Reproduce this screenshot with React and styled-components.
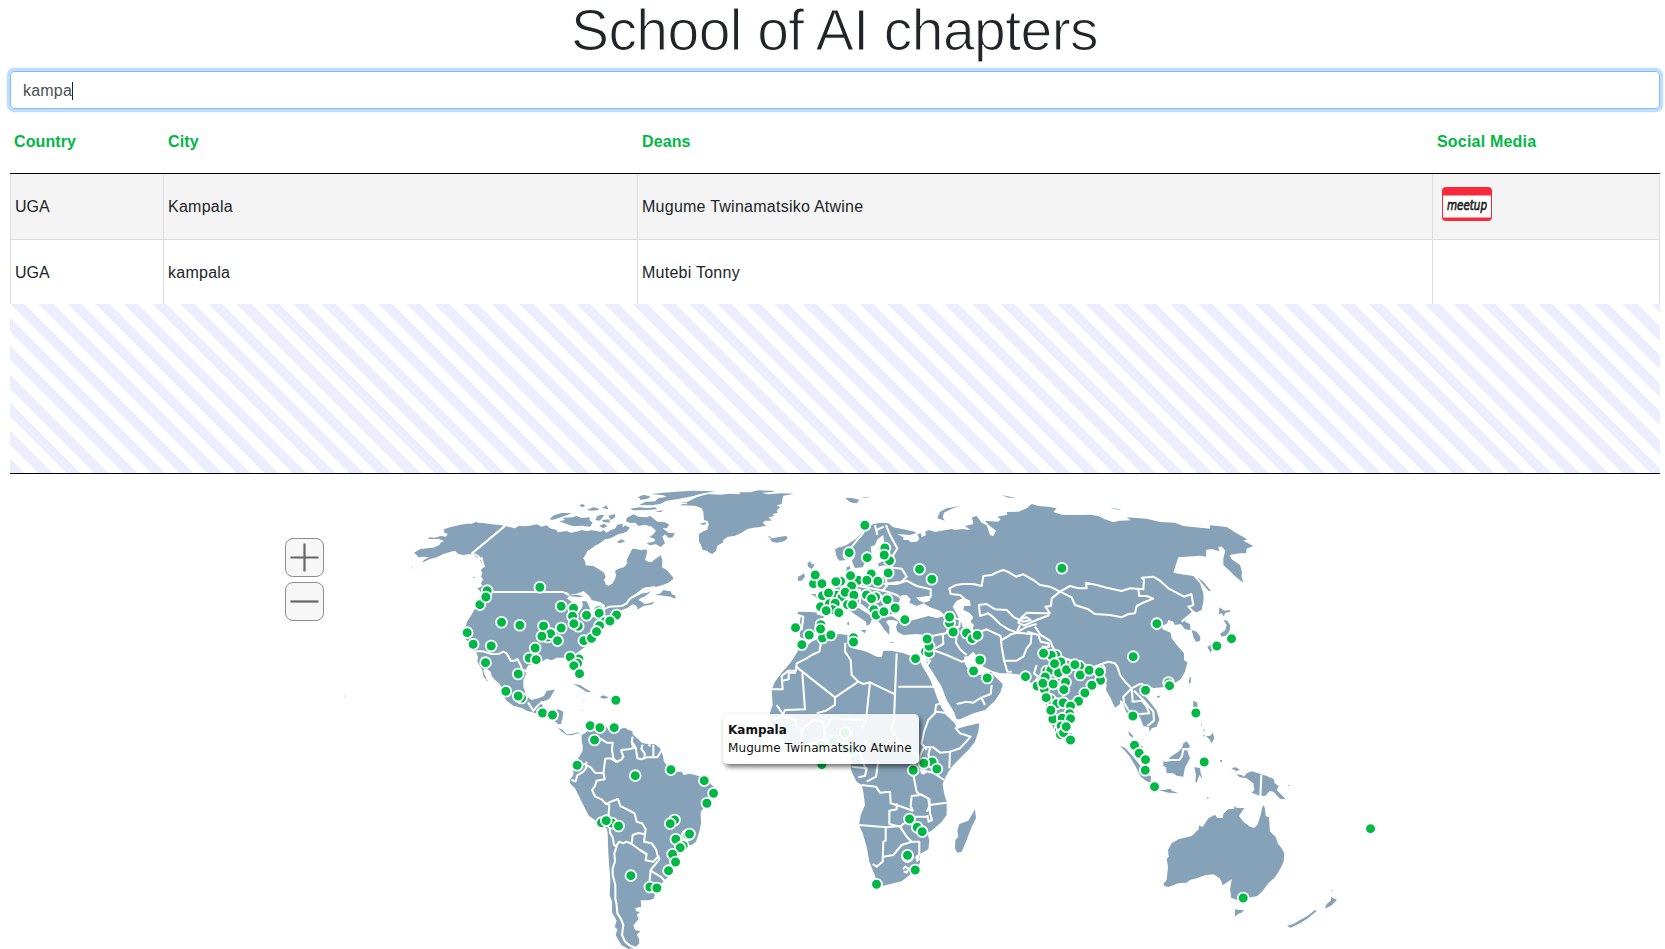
import React from 'react';
import styled, { createGlobalStyle } from 'styled-components';

const LAND = '#86a2b8';
const GREEN = '#00b845';

const GlobalStyle = createGlobalStyle`
  html, body { margin: 0; padding: 0; background: #fff; overflow: hidden; }
  *, *::before, *::after { box-sizing: border-box; }
  body { font-family: "Liberation Sans", Arial, sans-serif; font-size: 16px; color: #212529; }
`;

const Page = styled.main`
  width: 1665px;
  height: 949px;
  display: flex;
  flex-direction: column;
  overflow: hidden;
`;

const Title = styled.h1`
  margin: 0;
  height: 71px;
  padding-left: 4px;
  text-align: center;
  font-size: 57px;
  font-weight: 400;
  line-height: 60px;
  letter-spacing: -0.55px;
  white-space: nowrap;
  color: #212529;
  -webkit-text-stroke: 1.1px #fff;
`;

const Search = styled.div`
  display: flex;
  align-items: center;
  margin: 0 5px 0 10px;
  height: 38px;
  flex: none;
  padding: 1px 12px 0;
  border: 1px solid #80bdff;
  border-radius: 4px;
  box-shadow: 0 0 0 3.2px rgba(0, 123, 255, 0.25);
  color: #495057;
`;

const Query = styled.span`
  letter-spacing: 0.2px;
  line-height: 18px;
  border-right: 1px solid #222;
`;

const Table = styled.section`
  margin: 0 5px 0 10px;
  height: 365px;
  flex: none;
  display: flex;
  flex-direction: column;
  border-bottom: 1px solid #000;
`;

const columns = '153px 474px 795px 228px';

const HeadRow = styled.div`
  display: grid;
  grid-template-columns: ${columns};
  height: 65px;
  padding-top: 2px;
  flex: none;
  align-items: center;
  border-bottom: 1px solid #000;
`;

const HeadCell = styled.div`
  padding-left: ${(p) => (p.$first ? 4 : 5)}px;
  font-weight: 700;
  color: ${GREEN};
  letter-spacing: ${(p) => p.$spacing || 0.1}px;
`;

const Row = styled.div`
  display: grid;
  grid-template-columns: ${columns};
  height: ${(p) => (p.$striped ? 66 : 64)}px;
  flex: none;
  background: ${(p) => (p.$striped ? '#f4f4f4' : '#fff')};
  border-right: 1px solid #ddd;
  border-bottom: ${(p) => (p.$striped ? '1px solid #ddd' : '0')};
`;

const Cell = styled.div`
  display: flex;
  align-items: center;
  border-left: 1px solid #ddd;
  padding: ${(p) => (p.$low ? 2 : 0)}px 0 0 4px;
  color: #212529;
  letter-spacing: ${(p) => p.$spacing ?? 0.25}px;
`;

const Filler = styled.div`
  flex: 1;
  background: repeating-linear-gradient(45deg, #ecedfd 0, #ecedfd 10px, #fff 10px, #fff 20px);
`;

const MeetupIcon = styled.svg`
  display: block;
  overflow: visible;
  margin: -6px 0 0 5px;
`;

const MapPanel = styled.section`
  position: relative;
  flex: 1;
  min-height: 0;
`;

const MapSvg = styled.svg`
  display: block;
`;

const ZoomControls = styled.div`
  position: absolute;
  left: 284.5px;
  top: 63.5px;
  display: flex;
  flex-direction: column;
  gap: 5px;
`;

const ZoomButton = styled.button`
  width: 39px;
  height: 39px;
  padding: 0;
  border: 1px solid #8d8d8d;
  border-radius: 8px;
  background: #f7f7f7;
  display: grid;
  place-items: center;
`;

const Tooltip = styled.div`
  position: absolute;
  left: 723px;
  top: 240px;
  width: 196px;
  height: 50px;
  padding: 8px 0 0 5px;
  border-radius: 5px;
  background: rgba(255, 255, 255, 0.89);
  box-shadow: 2px 3px 5px rgba(0, 0, 0, 0.55);
  font-family: "DejaVu Sans", sans-serif;
  font-size: 12px;
  line-height: 18px;
  color: #111;
  white-space: nowrap;
`;

const TipTitle = styled.div`
  font-weight: 700;
  line-height: 17px;
  font-size: 12px;
`;

const TipText = styled.div`
  letter-spacing: 0.09px;
`;

/* Each region has its own origin on the page; its units are thirds of a pixel. */
const regions = [
  {
    x: 400, y: 480,
    land: [
      '42 218 60 208 80 205 100 203 118 195 122 188 132 184 118 177 86 177 86 172 105 173 122 168 138 170 143 161 133 158 132 148 150 142 175 136 200 131 215 131 230 125 236 129 250 129 275 133 300 135 316 138 345 145 356 138 375 139 390 137 410 133 425 140 440 136 450 145 468 149 474 157 500 153 512 158 530 155 545 150 560 153 575 151 590 153 602 156 610 150 620 158 632 150 645 146 652 134 668 131 668 143 675 136 690 143 680 155 668 160 656 162 632 175 615 178 600 190 585 197 575 205 562 213 558 222 550 235 556 247 557 256 580 258 597 268 612 278 617 290 612 300 618 314 626 317 638 310 646 295 648 285 645 272 660 265 672 262 682 250 680 240 690 220 697 206 712 208 722 211 738 208 742 215 738 230 735 240 745 245 755 247 762 240 782 226 787 240 786 262 800 270 818 290 820 297 805 308 790 314 770 320 740 321 728 325 715 335 700 348 690 355 700 353 715 346 728 340 742 338 752 332 747 340 733 350 724 353 715 360 725 365 733 372 748 370 762 365 758 373 730 378 712 389 712 380 700 372 680 385 665 390 650 405 640 420 620 430 612 440 605 452 595 460 590 475 580 485 570 490 560 498 545 508 530 520 520 530 525 545 540 570 545 585 538 590 525 580 515 560 505 545 490 533 470 533 455 541 440 536 425 545 405 550 385 556 375 572 378 582 370 600 370 620 377 640 387 655 395 660 415 655 432 648 440 632 465 629 458 640 450 655 440 661 420 665 418 672 428 674 428 684 408 690 425 706 398 697 380 692 365 684 340 677 320 662 312 650 304 625 300 613 285 600 275 588 272 575 262 568 255 550 247 535 238 520 240 515 246 540 258 565 250 570 254 585 262 602 250 590 247 570 238 556 232 545 234 530 228 515 215 505 208 490 195 475 190 460 197 440 201 425 210 412 220 395 228 380 235 360 246 340 232 325 248 318 243 310 250 298 243 290 247 280 243 270 250 262 245 250 240 240 250 238 246 230 232 234 222 226 210 222 190 225 175 222 165 212 150 216 130 222 110 232 90 237 66 248 72 240 87 232 70 230 55 232 50 225',
      '448 118 462 106 485 99 515 99 500 106 478 113 460 119',
      '478 124 495 120 488 113 520 112 528 107 545 114 570 112 568 120 578 128 570 140 545 137 520 139 500 132',
      '586 120 592 108 603 104 612 106 605 116 598 122', '606 120 628 118 630 128 610 126', '598 138 612 131 622 138 610 145',
      '680 114 700 103 715 110 740 112 750 107 772 125 795 127 808 134 800 145 788 145 805 158 825 160 818 172 806 174 795 163 787 170 795 190 782 201 768 193 750 196 740 190 765 184 765 178 748 170 758 165 768 152 755 140 735 134 715 138 706 128 690 129 678 124',
      '755 42 790 38 830 35 880 32 945 34 900 42 880 48 850 54 830 58 800 62 780 72 755 76 718 75 735 66 765 64 775 55 800 50 790 46',
      '712 52 730 46 750 48 746 55 725 57', '690 86 720 82 740 84 765 82 772 88 740 90 700 91', '538 76 548 72 556 78 546 82', '560 90 580 82 592 84 598 90 575 92', '606 84 620 76 625 88', '625 107 645 102 645 112 632 120', '650 186 665 178 676 184 660 190', '765 94 790 91 782 97',
      '765 345 782 340 790 330 800 332 812 334 816 343 828 348 824 356 812 350 795 348 778 346',
      '520 612 540 615 560 628 575 637 560 636 545 626', '600 650 610 646 625 652 615 656 605 655', '220 288 226 294 220 293', '34 262 38 264 34 265',
      '460 690 490 695 487 720 470 718 478 705',
    ],
    water: [
      '488 338 500 335 510 345 535 340 550 333 568 348 575 360 600 366 615 376 612 392 585 410 575 412 560 392 550 372 545 385 530 405 522 392 530 368 515 365 500 355 508 350',
    ],
    patches: ['500 347 528 344 552 349 538 352', '545 364 560 364 570 385 568 395 552 385'],
    lines: [
      '316 137 216 220 232 227 246 240 252 262', '258 336 492 336', '610 388 628 380 665 378 680 370 690 356 712 342 740 326 765 321',
      '226 514 248 514 275 522 298 521 310 515 320 520 332 542 345 542 352 537 362 556 366 568 378 573', '384 667 400 692 418 672',
    ],
  },
  {
    x: 640, y: 480,
    land: [
      '118 66 140 67 146 64 170 52 190 46 205 42 240 44 270 41 298 43 300 37 330 37 355 31 405 32 395 36 366 38 382 43 425 40 462 41 430 47 427 58 425 72 410 76 420 82 410 92 414 98 398 102 402 108 385 112 395 122 376 122 368 128 378 137 360 141 340 143 322 147 305 158 285 167 262 171 250 180 248 188 232 197 228 212 217 222 205 217 202 212 188 210 183 195 177 185 177 162 190 154 202 149 206 134 204 124 192 120 190 95 185 85 165 77 120 76 128 72 142 73 140 69',
      '0 49 12 45 30 52 18 58 0 59', '180 131 195 127 200 133 185 134', '382 168 392 170 396 175 418 171 430 169 440 168 442 176 432 184 412 188 398 186 388 178 396 178',
      '502 251 510 243 515 253 524 252 520 261 514 267 505 260', '474 290 485 285 492 280 495 290 485 302 474 303', '512 343 528 342 526 350', '586 208 600 200 600 240 592 235',
    ],
    lines: [],
  },
  {
    x: 440, y: 680,
    land: [
      '425 165 435 160 445 150 450 140 470 135 498 137 505 150 525 150 555 143 565 150 577 153 578 163 595 178 605 188 625 193 645 193 660 205 668 225 672 245 685 262 700 275 725 275 730 285 750 281 785 290 800 300 822 322 822 340 812 365 790 385 782 395 783 430 778 455 768 485 755 495 735 498 722 510 715 535 705 560 695 580 680 595 665 610 655 625 640 635 645 645 640 657 625 661 602 661 604 680 586 684 588 694 600 696 590 705 596 716 588 727 580 736 585 750 600 754 590 765 597 776 598 790 585 803 565 807 545 796 535 780 527 765 532 748 524 740 530 722 516 697 516 665 509 645 511 600 508 560 505 520 503 460 500 445 480 435 465 420 447 408 440 395 420 355 405 325 390 310 390 300 400 285 400 260 415 235 428 212 428 195 425 185',
      '345 92 355 88 370 95 366 110 364 132 355 133 344 124 356 116 350 104', '352 142 368 150 380 163 398 161 412 157 425 165 412 160 396 166 380 165 364 154',
      '424 90 428 92 424 93', '138 0 142 0 143 5', '430 60 434 61 431 63', '500 52 504 52 504 55',
    ],
    lines: [
      '510 445 510 458 518 472 522 495 530 500 523 520 525 545 518 565 518 585 526 615 526 655 530 675 532 700 542 715 550 735 546 765 555 785 570 797 588 803',
      '440 245 438 255 452 262 465 278 490 280 496 236 512 235 530 246 545 238 550 230 543 210 565 208 582 204 575 190',
      '463 176 485 178 500 188 518 188 516 210 520 235 530 246', '410 255 438 252 438 265 430 275 412 286 407 304 394 300',
      '491 280 494 298 470 302 465 318 456 330 466 350 485 358 498 372 520 362 534 357 541 378 565 390 584 400 590 425 606 430 617 448 612 485 635 490 648 508 654 530 640 545 617 541 620 522 600 510 575 492 560 485 550 490 538 485 528 498',
      '498 370 508 375 506 400 505 430', '575 490 578 465 595 459 612 462', '655 528 658 538 632 570 628 610', '632 572 665 592 675 605',
      '578 170 575 185 587 202 592 235 605 238 622 232 652 232 664 212', '608 194 604 206 615 222 612 235', '640 195 640 230', '625 195 632 197',
    ],
  },
  {
    x: 760, y: 480,
    land: [
      '340 132 365 128 385 130 400 142 430 148 465 155 468 160 450 165 412 162 430 172 430 180 445 180 452 187 470 185 478 178 472 162 484 160 484 172 498 165 495 155 508 150 525 156 545 152 575 147 585 150 605 147 632 150 615 138 640 132 636 112 650 108 665 128 680 136 690 165 700 168 708 152 686 135 675 122 715 125 722 118 712 110 742 104 740 96 775 95 800 85 815 72 835 78 865 80 890 85 880 96 905 104 950 105 990 104 1015 108 1035 118 1060 127 1078 122 1112 121 1100 112 1160 116 1200 126 1245 128 1270 138 1350 146 1350 136 1400 141 1430 160 1462 178 1450 182 1480 198 1460 206 1458 220 1440 220 1408 225 1415 238 1440 255 1446 275 1445 290 1450 308 1430 293 1412 275 1390 255 1390 235 1396 212 1386 200 1375 200 1378 214 1355 207 1338 210 1338 230 1320 227 1255 232 1240 278 1265 283 1300 288 1320 310 1330 340 1331 360 1325 390 1310 397 1296 393 1295 405 1278 412 1275 425 1290 432 1292 450 1275 448 1262 432 1245 435 1240 425 1225 420 1222 430 1206 438 1208 448 1232 458 1235 475 1250 495 1272 520 1272 540 1282 547 1275 575 1262 598 1240 612 1210 622 1180 624 1160 616 1148 628 1155 648 1175 672 1190 692 1198 718 1190 740 1175 745 1167 756 1168 742 1150 738 1140 712 1128 705 1110 715 1096 690 1088 665 1080 660 1080 672 1065 683 1052 655 1038 630 1040 615 1030 590 1020 605 1002 610 985 625 970 645 945 665 930 680 925 715 912 740 898 768 885 762 870 715 860 680 850 640 840 625 825 615 800 600 775 583 750 580 720 580 695 572 680 565 670 560 655 535 640 515 625 528 612 530 612 545 622 565 642 580 660 585 680 580 693 575 700 585 728 612 722 635 705 662 675 690 640 700 600 718 590 718 582 695 560 660 545 620 520 580 500 550 500 535 495 510 505 480 495 465 470 462 430 465 412 455 408 440 415 425 400 420 385 420 378 425 388 440 388 465 372 448 360 430 345 415 335 400 320 385 305 372 295 370 280 372 305 390 330 405 345 418 335 420 330 432 320 438 318 425 298 412 278 398 265 388 240 395 220 402 200 408 172 422 166 442 165 465 135 480 120 470 118 440 122 410 112 402 115 395 150 396 180 398 185 385 178 362 165 348 180 350 200 335 225 320 240 310 255 300 258 285 260 262 270 258 272 285 300 300 350 300 372 290 368 268 385 262 372 256 355 260 355 250 372 242 398 238 396 228 380 234 362 226 355 205 372 185 370 165 352 178 345 195 332 200 335 222 315 248 308 262 285 264 278 250 275 235 260 240 238 242 228 225 226 208 260 195 290 175 315 148',
      '255 55 275 54 298 59 290 70 275 68 265 62', '303 52 330 50 318 53', '532 115 540 95 560 85 600 78 575 86 552 98 548 112 555 122',
      '725 45 750 50 768 54 745 53', '783 58 797 62', '1048 84 1070 86 1088 89 1065 88', '262 426 267 426 267 436 262 434', '302 450 319 450 314 460', '384 485 400 486 400 490',
      '1312 292 1330 305 1342 320 1354 333 1345 332 1325 308', '1295 450 1310 455 1321 470 1320 482 1308 486 1300 470',
      '1378 382 1392 392 1412 390 1408 397 1395 398 1392 410 1385 400 1377 403', '1390 420 1402 422 1410 435 1410 448 1402 466 1385 470 1380 462 1396 450 1400 435', '1342 502 1355 492 1360 500 1352 518',
      '1288 595 1293 590 1292 608 1287 612', '1190 648 1202 647 1195 655', '922 754 938 762 942 780 930 788 920 775', '715 605 728 618 720 630',
    ],
    water: [
      '578 380 590 362 612 353 630 362 632 378 612 378 610 390 628 398 640 412 632 425 642 435 638 448 652 455 640 460 612 455 605 430 592 405',
      '414 372 425 345 440 345 452 358 448 368 470 378 490 370 510 382 540 392 556 408 530 414 505 408 475 416 440 425 415 422 405 415 395 408',
      '468 352 490 350 512 348 510 362 492 368 478 362', '1105 690 1116 690 1120 702 1108 706',
    ],
    lines: [
      '612 355 600 345 572 342 568 325 588 315 610 312 640 312 665 318 670 288 695 285 715 275 730 270 745 276 768 290 790 283 820 300 840 315 870 320 900 335',
      '900 335 930 318 955 325 980 325 978 308 1010 315 1040 323 1085 333 1110 325 1150 328 1152 300 1145 293 1180 290 1200 302 1225 325 1272 350 1294 342 1300 375 1285 380 1300 396 1265 425',
      '900 335 935 352 945 375 985 388 1005 402 1050 405 1085 412 1105 402 1125 400 1130 378 1145 370 1180 356 1160 348 1138 348 1135 328',
      '900 335 875 355 873 378 856 380 870 400 848 400 800 398 785 412 775 428 792 436 830 420 868 405', '655 375 680 372 705 388 740 390 762 412 790 425 812 420 800 412 780 418',
      '657 375 660 408 685 400 700 412 720 432 745 448 770 458 800 440 830 432', '652 458 680 448 722 468 725 500 732 540 742 575 755 575',
      '725 480 755 462 775 458 815 462 812 490 800 505 790 530 770 542 735 542', '770 458 780 435', '802 455 835 465 842 485 865 490 868 500 845 500',
      '825 440 842 465 870 482 880 505 900 530 960 550 1000 562 1025 552 1045 545 1065 550 1072 560 1080 585 1095 605 1115 625 1140 612 1150 612', '830 555 822 580 835 590 822 610',
      '1028 555 1035 565 1025 585 1035 595', '1115 625 1090 650 1092 668 1105 690', '1115 625 1118 665 1145 662 1160 680 1168 700 1140 702 1145 704', '1122 632 1150 660 1180 695 1182 722 1162 738',
      '378 135 388 160 398 180 412 205 396 232', '345 135 352 165', '315 150 305 165 290 182 274 202 274 230', '350 150 372 140', '396 242 396 262 358 262', '385 262 425 266 440 290 425 305 372 312', '372 312 410 312 440 302 470 318 512 328 512 350 495 352',
      '375 290 382 315 365 335', '295 318 340 326 375 333 410 345 425 355', '220 325 245 340 245 375 230 395', '255 320 300 330 300 370', '300 345 370 350 410 375', '330 350 335 385 360 410 400 405', '345 385 390 380 412 385', '170 400 200 408', '114 405 130 410 125 450',
      '555 412 568 440 558 460 530 465 505 470', '580 395 560 412 600 418 598 440 575 445', '548 462 550 492 520 508 502 545', '590 462 588 488 600 508 620 525', '525 512 560 525 605 545 620 540',
      '590 672 620 665 640 668 660 655 692 642 695 615', '665 655 675 675', '502 555 512 540',
    ],
  },
  {
    x: 720, y: 640,
    land: [
      '275 5 290 -2 320 -12 360 -18 382 -15 388 10 398 25 420 30 440 35 470 50 485 52 490 32 515 32 550 40 585 52 600 58 605 75 615 92 630 118 642 148 652 175 665 205 685 230 703 248 712 266 740 258 778 250 775 275 765 305 745 330 720 355 700 375 685 395 675 415 668 432 672 460 680 485 680 525 665 545 640 568 622 580 628 600 625 628 600 642 600 668 585 690 565 708 545 724 520 730 490 737 478 732 468 715 458 690 448 665 440 620 428 580 417 555 422 525 435 495 430 455 425 435 410 425 398 402 392 385 395 360 385 345 370 325 340 325 305 305 260 310 220 318 195 300 170 270 150 245 150 218 158 195 155 150 165 125 185 98 210 70 225 48 235 30 260 18',
      '765 508 768 535 755 560 740 600 725 635 712 638 705 625 706 600 715 590 712 570 718 552 745 542 755 525',
    ],
    water: ['602 392 615 388 622 395 612 404 602 400'],
    lines: [
      '293 -10 302 15 298 35 275 45 260 55 230 70 228 92 205 92 185 108 188 148 155 148', '228 98 206 98 206 118 188 122', '228 80 345 172', '247 100 255 208 195 210 190 222',
      '345 172 345 195 318 212 290 220', '345 172 415 125 395 105 392 60 375 35 376 8', '415 125 430 132 450 127 445 175 438 240 425 265', '450 127 525 163 530 40', '535 140 642 140', '525 163 522 240 515 270 540 310 600 350',
      '660 190 648 195 645 220 625 240 612 275 605 310 620 330', '648 215 675 218 705 245', '705 262 720 280 752 290 720 325 690 335 660 338 640 322 610 322', '690 332 688 385', '630 325 625 345 635 370', '600 390 640 398 672 420',
      '610 325 600 350 582 380 580 405 590 455 600 465 575 468 572 498 578 512 545 500 512 490 510 455 480 458 468 440 425 435', '475 362 468 410 440 425', '395 380 440 385 435 408 415 412', '440 300 420 340 440 395',
      '530 490 530 508 508 512 508 552 540 560 580 530 625 530', '600 462 625 475 628 500 620 515', '628 475 630 520 636 540 626 545 622 525', '628 495 680 488', '417 555 500 562 540 558',
      '497 562 497 602 490 605 488 665 470 680 458 672', '540 560 560 590 575 605 598 605 598 640 590 665', '490 650 520 645 545 615 575 605', '549 688 556 680 565 686 560 698 551 694', '586 655 592 648 597 658 590 662',
      '170 195 190 225 160 240', '190 230 225 240 235 270', '245 310 245 270 280 240 310 245 315 300', '318 262 335 235 430 240',
    ],
  },
  {
    x: 1100, y: 680,
    land: [
      '60 198 75 203 95 225 115 250 140 278 153 290 152 308 140 304 122 290 108 262 90 230 75 212', '84 152 98 166 100 175 88 166', '122 196 130 202 122 203', '175 330 190 330 210 326 216 332 236 340 205 338',
      '190 242 200 246 210 232 235 215 246 204 250 190 260 184 270 198 262 212 270 235 262 250 255 262 250 290 230 287 220 280 200 280 198 262 190 258',
      '283 262 300 264 302 280 308 298 298 285 290 308 286 305 288 285', '280 62 292 68 293 90 280 82', '318 168 330 168 338 158 343 175 335 190 328 178', '310 162 315 168 311 170', '303 133 307 135 303 137', '308 150 314 148 312 154',
      '266 0 272 0 269 12', '360 240 366 240 366 246 361 246', '562 315 570 315 568 318', '320 352 328 354 322 357',
      '394 264 408 262 420 270 408 273', '408 283 425 285 432 290 440 280 455 274 475 280 500 288 522 298 524 310 536 318 530 330 545 345 557 358 540 356 520 335 508 333 497 347 480 348 455 338 463 330 460 310 440 295 420 292',
      '403 378 410 384 433 384 417 408 430 425 450 440 462 444 472 435 482 405 486 385 490 375 495 385 497 408 507 412 510 455 527 470 533 490 545 505 553 520 551 545 540 568 525 592 505 610 490 630 472 648 440 655 412 660 393 653 392 640 390 630 395 598 368 616 360 595 340 583 315 586 290 595 270 600 260 608 235 610 205 621 193 618 190 612 200 600 204 560 200 537 206 530 204 510 215 490 235 478 275 468 296 448 298 436 308 442 325 415 345 404 352 414 368 414 370 402 384 388 403 386',
      '405 688 418 690 432 690 425 698 414 702 405 711', '561 738 580 732 600 720 622 708 645 690 650 693 625 714 600 730 572 743', '675 686 680 672 692 662 694 650 700 655 711 659 695 676 680 684', '693 628 697 630 697 636',
    ],
    lines: ['193 243 210 240 238 240 246 228 250 207 272 208', '484 284 481 350'],
  },
];

const dotGroups = [
  [400, 480, '419 321 261 331 239 373 257 350 304 426 359 435 201 457 219 492 273 497 256 547 483 378 520 384 517 408 559 405 595 391 597 399 649 404 614 424 629 422 598 436 589 454 534 438 521 430 430 437 483 443 442 470 451 460 425 468 472 481 551 481 574 474 589 454 387 533 405 503 408 538 536 536 510 530 532 549 521 556 538 580 354 581 317 633 364 653 354 647 647 660 427 698 457 704'],
  [440, 680, '450 136 479 142 522 142 463 179 411 255 585 286 692 268 792 301 820 339 800 369 703 419 690 430 742 464 748 461 707 477 729 496 720 502 697 522 706 545 685 571 484 427 515 428 498 421 535 437 572 586 629 620 650 623'],
  [760, 480, '314 135 266 223 267 217 321 232 374 203 388 241 372 224 160 310 165 284 185 310 294 300 271 286 333 281 384 278 241 303 227 304 320 300 353 303 274 317 187 346 228 345 205 338 246 350 255 336 281 345 181 379 208 370 225 369 262 373 277 373 217 388 198 391 236 397 319 344 346 350 334 355 381 358 341 388 348 404 371 394 405 383 434 418 106 442 147 464 182 433 187 473 181 446 212 464 125 493 280 472 280 485 478 267 515 297 568 428 568 410 579 455 619 458 636 475 651 465 496 514 506 517 507 498 501 476 466 535 659 539 640 572 681 593 796 589'],
  [1000, 480, '185 264 470 430 399 529 694 475 650 497 436 630 505 607 508 616 587 698 398 707 403 795 417 819 436 838 435 870 612 845 167 525 153 525 130 519 182 545 140 572 152 570 175 577 163 550 199 568 238 558 240 584 224 553 267 570 301 600 298 575 135 590 111 617 132 626 128 609 159 611 196 606 191 628 275 615 254 638 235 663 150 657 138 652 170 670 189 667 211 677 158 716 152 690 208 700 186 714 211 715 178 748 183 737 181 763 190 757 198 739 211 779'],
  [720, 640, '302 315 338 303 370 325 397 330 375 277 305 373 579 390 636 365 611 369 650 386 568 536 591 561 606 574 562 649 562 645 585 689 469 732'],
  [1100, 680, '163 319 811 445 429 653'],
];

const pins = dotGroups.flatMap(([ox, oy, text]) => {
  const n = text.split(' ').map(Number);
  const out = [];
  for (let i = 0; i < n.length; i += 2) out.push([ox + 0.2 + n[i] / 3, oy + 0.3 + n[i + 1] / 3]);
  return out;
});

function WorldMap() {
  return (
    <MapSvg width="1665" height="475" viewBox="0 474 1665 475">
      {regions.map((r) => (
        <g key={`${r.x}-${r.y}`} transform={`translate(${r.x} ${r.y}) scale(0.33333)`}>
          {r.land.map((p) => <polygon key={p} points={p} fill={LAND} />)}
          {(r.water || []).map((p) => <polygon key={p} points={p} fill="#fff" />)}
          {(r.patches || []).map((p) => <polygon key={p} points={p} fill={LAND} />)}
          {r.lines.map((p) => (
            <polyline key={p} points={p} fill="none" stroke="#fff" strokeWidth="6.2" strokeLinejoin="round" />
          ))}
        </g>
      ))}
      <circle cx="345" cy="696" r="0.6" fill={LAND} />
      {pins.map(([x, y], i) => (
        <circle key={i} cx={x} cy={y} r="5.4" fill={GREEN} stroke="#fff" strokeWidth="1.8" />
      ))}
    </MapSvg>
  );
}

function Meetup() {
  return (
    <MeetupIcon width="50" height="34" viewBox="0 0 50 34">
      <rect x="0" y="0" width="50" height="34" rx="4" fill="#f9293c" />
      <rect x="1" y="8.5" width="48" height="22" fill="#fff" />
      <text
        x="5" y="23.2" textLength="40" lengthAdjust="spacingAndGlyphs" fill="#1f1f1f" stroke="#1f1f1f" strokeWidth="0.7"
        letterSpacing="0" fontFamily="DejaVu Sans, sans-serif" fontStyle="italic" fontSize="14"
      >meetup</text>
    </MeetupIcon>
  );
}

export default function App() {
  return (
    <Page>
      <GlobalStyle />
      <Title>School of AI chapters</Title>
      <Search><Query>kampa</Query></Search>
      <Table>
        <HeadRow>
          <HeadCell $first>Country</HeadCell>
          <HeadCell>City</HeadCell>
          <HeadCell>Deans</HeadCell>
          <HeadCell $spacing={0.2}>Social Media</HeadCell>
        </HeadRow>
        <Row $striped>
          <Cell $spacing={0}>UGA</Cell>
          <Cell>Kampala</Cell>
          <Cell>Mugume Twinamatsiko Atwine</Cell>
          <Cell><Meetup /></Cell>
        </Row>
        <Row>
          <Cell $low $spacing={0}>UGA</Cell>
          <Cell $low>kampala</Cell>
          <Cell $low>Mutebi Tonny</Cell>
          <Cell />
        </Row>
        <Filler />
      </Table>
      <MapPanel>
        <WorldMap />
        <ZoomControls>
          <ZoomButton aria-label="Zoom in">
            <svg width="29" height="29" viewBox="0 0 29 29" stroke="#666" strokeWidth="2.2"><path d="M0.5 14.5H28.5M14.5 0.5V28.5" /></svg>
          </ZoomButton>
          <ZoomButton aria-label="Zoom out">
            <svg width="29" height="29" viewBox="0 0 29 29" stroke="#666" strokeWidth="2.2"><path d="M0.5 14.5H28.5" /></svg>
          </ZoomButton>
        </ZoomControls>
        <Tooltip>
          <TipTitle>Kampala</TipTitle>
          <TipText>Mugume Twinamatsiko Atwine</TipText>
        </Tooltip>
      </MapPanel>
    </Page>
  );
}
